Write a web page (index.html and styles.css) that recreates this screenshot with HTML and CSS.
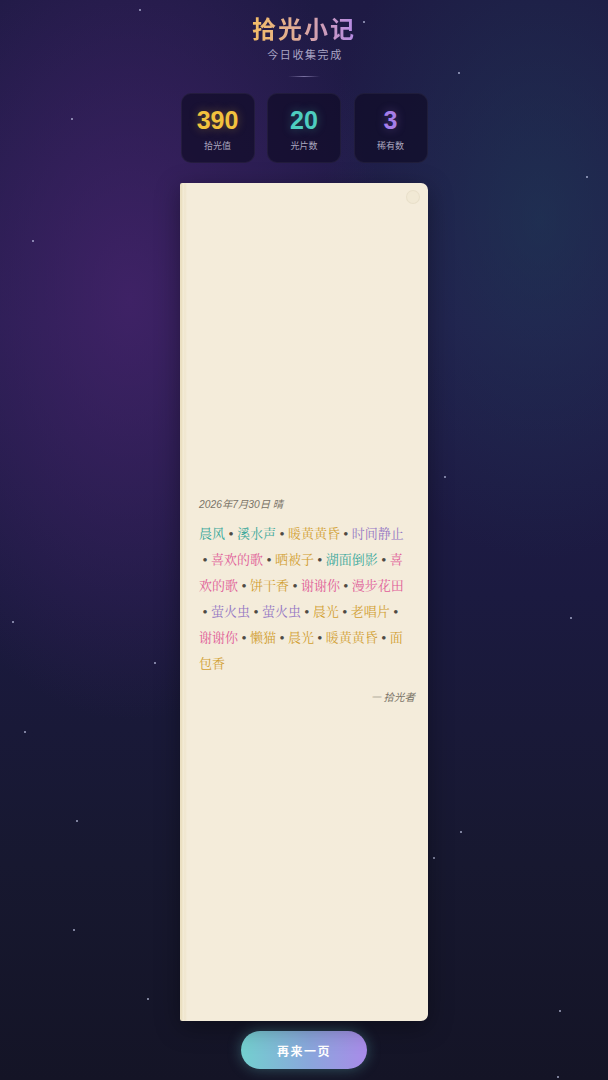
FILE: index.html
```html
<!DOCTYPE html>
<html lang="zh">
<head>
<meta charset="utf-8">
<title>拾光小记</title>
<link rel="stylesheet" href="styles.css">
</head>
<body>
<div class="sky">
  <i class="star" style="left:139px;top:9px"></i>
  <i class="star" style="left:363px;top:21px"></i>
  <i class="star" style="left:458px;top:72px"></i>
  <i class="star" style="left:71px;top:118px"></i>
  <i class="star" style="left:32px;top:240px"></i>
  <i class="star" style="left:586px;top:176px"></i>
  <i class="star" style="left:444px;top:476px"></i>
  <i class="star" style="left:12px;top:621px"></i>
  <i class="star" style="left:570px;top:617px"></i>
  <i class="star" style="left:154px;top:662px"></i>
  <i class="star" style="left:24px;top:731px"></i>
  <i class="star" style="left:76px;top:820px"></i>
  <i class="star" style="left:460px;top:831px"></i>
  <i class="star" style="left:433px;top:857px"></i>
  <i class="star" style="left:73px;top:929px"></i>
  <i class="star" style="left:147px;top:998px"></i>
  <i class="star" style="left:559px;top:1010px"></i>
  <i class="star" style="left:557px;top:1076px"></i>
</div>
<main class="page">
  <h1 class="title">拾光小记</h1>
  <p class="subtitle">今日收集完成</p>
  <div class="divider"></div>
  <section class="stats">
    <div class="stat"><div class="num gold">390</div><div class="label">拾光值</div></div>
    <div class="stat"><div class="num teal">20</div><div class="label">光片数</div></div>
    <div class="stat"><div class="num purple">3</div><div class="label">稀有数</div></div>
  </section>
  <article class="note">
    <span class="seal"></span>
    <div class="note-body">
      <div class="date">2026年7月30日 晴</div>
      <p class="words"><span class="w teal">晨风</span><span class="sep">•</span><span class="w teal">溪水声</span><span class="sep">•</span><span class="w gold">暖黄黄昏</span><span class="sep">•</span><span class="w purple">时间静止</span><span class="sep">•</span><span class="w pink">喜欢的歌</span><span class="sep">•</span><span class="w gold">晒被子</span><span class="sep">•</span><span class="w teal">湖面倒影</span><span class="sep">•</span><span class="w pink">喜欢的歌</span><span class="sep">•</span><span class="w gold">饼干香</span><span class="sep">•</span><span class="w pink">谢谢你</span><span class="sep">•</span><span class="w pink">漫步花田</span><span class="sep">•</span><span class="w purple">萤火虫</span><span class="sep">•</span><span class="w purple">萤火虫</span><span class="sep">•</span><span class="w gold">晨光</span><span class="sep">•</span><span class="w gold">老唱片</span><span class="sep">•</span><span class="w pink">谢谢你</span><span class="sep">•</span><span class="w gold">懒猫</span><span class="sep">•</span><span class="w gold">晨光</span><span class="sep">•</span><span class="w gold">暖黄黄昏</span><span class="sep">•</span><span class="w gold">面包香</span></p>
      <div class="sign">— 拾光者</div>
    </div>
  </article>
  <button class="again">再来一页</button>
</main>
</body>
</html>
```
FILE: styles.css
```css
html, body {
  margin: 0;
  padding: 0;
}
body {
  width: 608px;
  height: 1080px;
  overflow: hidden;
  position: relative;
  font-family: "Noto Sans CJK SC", "Noto Sans", sans-serif;
  background:
    radial-gradient(ellipse 260px 420px at 130px 300px, rgba(72, 36, 110, 0.75), rgba(72, 36, 110, 0) 100%),
    radial-gradient(ellipse 220px 340px at 540px 220px, rgba(30, 62, 88, 0.55), rgba(30, 62, 88, 0) 100%),
    linear-gradient(180deg, #1e1a44 0%, #221c4c 30%, #1b1a40 55%, #171830 80%, #141426 100%);
}
.sky {
  position: absolute;
  inset: 0;
  pointer-events: none;
}
.star {
  position: absolute;
  width: 2px;
  height: 2px;
  border-radius: 50%;
  background: rgba(220, 225, 255, 0.7);
}
.page {
  position: relative;
  display: flex;
  flex-direction: column;
  align-items: center;
  padding-top: 13px;
}
.title {
  margin: 0;
  font-size: 24px;
  line-height: 30px;
  font-weight: 700;
  letter-spacing: 2px;
  background: linear-gradient(90deg, #f3bd66 0%, #dca8a0 50%, #b48ae6 100%);
  -webkit-background-clip: text;
  background-clip: text;
  color: transparent;
}
.subtitle {
  margin: 3px 0 0;
  font-size: 11px;
  line-height: 16px;
  letter-spacing: 1.6px;
  color: #aaa5c4;
  padding-left: 2px;
}
.divider {
  margin-top: 14px;
  width: 32px;
  height: 1px;
  background: linear-gradient(90deg, rgba(180, 170, 220, 0), rgba(180, 170, 220, 0.6), rgba(180, 170, 220, 0));
}
.stats {
  margin-top: 16px;
  display: flex;
  gap: 12.5px;
}
.stat {
  width: 74px;
  height: 70px;
  box-sizing: border-box;
  border-radius: 10px;
  background: rgba(16, 12, 38, 0.7);
  border: 1px solid rgba(255, 255, 255, 0.05);
  display: flex;
  flex-direction: column;
  align-items: center;
  padding-top: 11px;
}
.num {
  font-family: "Liberation Sans", Arial, sans-serif;
  font-weight: 700;
  font-size: 25px;
  line-height: 30px;
}
.num.gold { color: #f2c23e; text-shadow: 0 0 10px rgba(242, 194, 62, 0.35); }
.num.teal { color: #4ecdc0; text-shadow: 0 0 10px rgba(78, 205, 192, 0.35); }
.num.purple { color: #a67ee9; text-shadow: 0 0 10px rgba(166, 126, 233, 0.35); }
.label {
  margin-top: 5px;
  font-size: 9px;
  line-height: 12px;
  color: #aaa6bf;
}
.note {
  position: relative;
  margin-top: 20px;
  width: 248px;
  height: 838px;
  box-sizing: border-box;
  background: linear-gradient(90deg, #ebe0c2 0, #ebe0c2 2px, #f4ecd8 3px, #efe5cd 5px, #f4ecda 7px, #f4ecdb 100%);
  border-radius: 2px 7px 7px 2px;
  box-shadow: 0 6px 24px rgba(0, 0, 0, 0.35);
  display: flex;
  flex-direction: column;
  justify-content: center;
  padding: 0 15px 0 19px;
}
.seal {
  position: absolute;
  top: 7px;
  right: 8px;
  width: 12px;
  height: 12px;
  border-radius: 50%;
  border: 1px solid rgba(200, 190, 165, 0.22);
  background: rgba(235, 225, 200, 0.3);
}
.note-body {
  margin-top: -3px;
}
.date {
  font-family: "Liberation Sans", "Noto Sans CJK SC", sans-serif;
  font-style: italic;
  font-size: 10.3px;
  line-height: 14px;
  color: #7a7468;
}
.words {
  margin: 8px 0 0;
  font-family: "Noto Serif CJK SC", "Liberation Serif", serif;
  font-size: 13px;
  line-height: 26px;
}
.w.teal { color: #3aa89a; }
.w.gold { color: #d2a032; }
.w.purple { color: #9478c4; }
.w.pink { color: #e05c98; }
.sep {
  font-family: "Liberation Serif", serif;
  font-weight: 700;
  line-height: 0;
  color: #4e4a44;
  margin: 0 3.7px;
}
.sign {
  margin-top: 14px;
  margin-right: -2px;
  text-align: right;
  font-style: italic;
  font-size: 10.5px;
  line-height: 14px;
  color: #7a7468;
}
.again {
  margin-top: 10px;
  width: 126px;
  height: 38px;
  border: none;
  border-radius: 19px;
  background: linear-gradient(90deg, #73d0cf 0%, #8aa6dc 55%, #a98be9 100%);
  color: #ffffff;
  font-family: "Noto Sans CJK SC", sans-serif;
  font-weight: 700;
  font-size: 12px;
  letter-spacing: 1.5px;
  box-shadow: 0 0 14px rgba(110, 210, 210, 0.35);
  cursor: pointer;
}
```
